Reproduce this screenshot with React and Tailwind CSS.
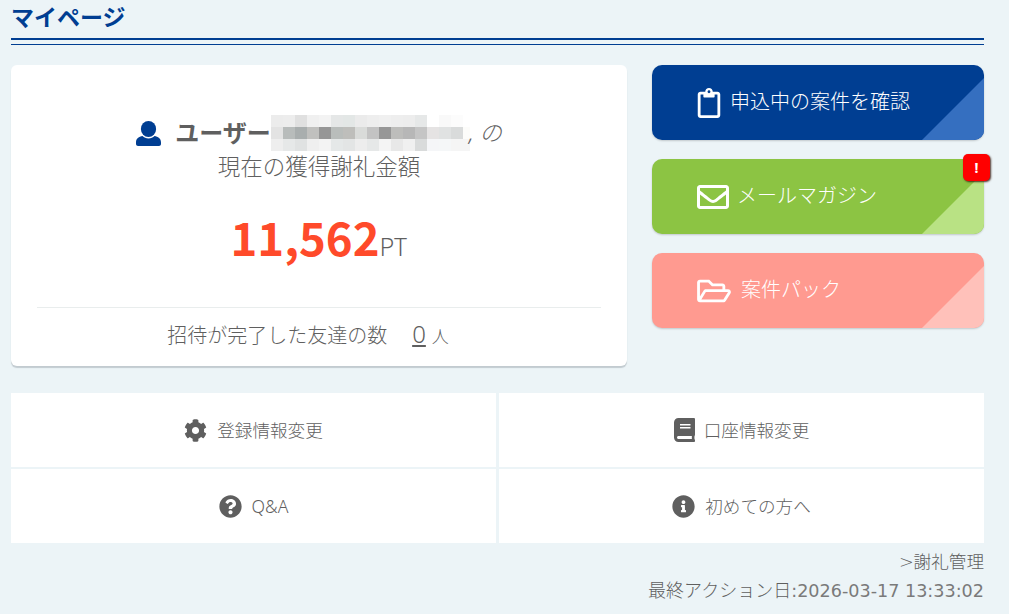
import React from "react";
import { FaRegClipboard, FaRegEnvelope, FaRegFolderOpen, FaCog, FaBook, FaQuestionCircle, FaInfoCircle } from "react-icons/fa";

const FONT = "font-['Noto_Sans','Noto_Sans_CJK_JP',sans-serif]";

const mosaic = [
  ["#ececec","#ededed","#e0e0e0","#f0f0f0","#f3f3f3","#e5e7e7","#e3e7e6","#ebebeb","#eeeeee","#f0f0f0","#eeeeee","#ededed","#e6e8e8","#ffffff","#f9f9f9","#fcfcfc","#ffffff"],
  ["#e3e3e3","#b8bcbb","#a9aeae","#c0c0be","#969696","#b9bdbb","#bebebb","#d9dbd9","#c3c3c3","#979797","#bdbdbb","#b7b7b7","#c5c5c5","#e5e3e3","#e0e2e2","#d9dbdb","#fcfcfa"],
  ["#eeeeee","#e6e8e8","#e0e2e2","#efefef","#f3f3f3","#e5e8e8","#e3e5e5","#ededed","#e6e8e8","#f4f4f4","#e8e8e8","#f0f0f0","#d9dbdb","#f5f6f8","#f5f7f8","#f5f5f5","#f5f5f5"],
];

function UserIcon() {
  return (
    <svg viewBox="0 0 25 25" className="mr-[14px] h-[25px] w-[25px] text-[#003e92]" fill="currentColor">
      <ellipse cx="12.5" cy="8" rx="7.6" ry="8" />
      <path d="M0 21.5C0 17.5 3 15.5 6.5 15 8 16.6 10 17.4 12.5 17.4S17 16.6 18.5 15C22 15.5 25 17.5 25 21.5V23C25 24.2 24 25 23 25H2C1 25 0 24.2 0 23Z" />
    </svg>
  );
}

function Action({ bg, tri, icon, gap, children, badge }) {
  return (
    <div className={`relative h-[75px] rounded-[10px] shadow-[0_1px_2px_rgba(0,0,0,0.18)] ${bg}`}>
      <div className="absolute inset-0 overflow-hidden rounded-[10px]">
        <div className={`absolute right-0 bottom-0 h-[62px] w-[62px] [clip-path:polygon(100%_0,100%_100%,0_100%)] ${tri}`} />
      </div>
      <div className={`relative flex h-full items-center pl-[45px] text-[20px] text-white ${gap}`}>
        {icon}
        <span className="-mt-[1px]">{children}</span>
      </div>
      {badge && (
        <div className="absolute -right-[6px] -top-[5px] flex h-[27px] w-[27px] items-center justify-center rounded-[5px] bg-[#ff0000] text-[14px] font-bold text-white shadow-[1px_1px_2px_rgba(60,30,20,0.9)]">!</div>
      )}
    </div>
  );
}

function Cell({ icon, gap, children }) {
  return (
    <div className={`flex h-[74px] items-center justify-center bg-white text-[17.6px] text-[#5f5f5f] ${gap}`}>
      {icon}
      <span>{children}</span>
    </div>
  );
}

export default function App() {
  return (
    <div className={`h-[614px] overflow-hidden bg-[#ecf4f7] pl-[11px] pr-[25px] font-light text-[#5f5f5f] ${FONT}`}>
      <h1 className="h-[38px] text-[23px] leading-[34px] font-bold text-[#003e92]">マイページ</h1>
      <div className="h-[7px] border-t-2 border-b border-t-[#003e92] border-b-[#003e92]" />

      <div className="mt-[20px] flex gap-[25px]">
        <div className="flex h-[301px] w-[616px] flex-col rounded-[6px] bg-white px-[26px] shadow-[0_2px_1px_#c2cbd0]">
          <div className="mt-[50px] flex h-[36px] items-center justify-center text-[22.4px]">
            <UserIcon />
            <span className="text-[24px] font-bold">ユーザー</span>
            <div className="flex flex-col">
              {mosaic.map((row, i) => (
                <div key={i} className="flex">
                  {row.map((c, j) => (
                    <div key={j} className={j === 16 ? "h-[12px] w-[7px]" : "h-[12px] w-[12px]"} style={{ background: c }} />
                  ))}
                </div>
              ))}
            </div>
            <span className="-ml-[1px] italic">, の</span>
          </div>
          <div className="mt-[-1px] text-center text-[22.5px] leading-[34px]">現在の獲得謝礼金額</div>
          <div className="mt-[22px] flex h-[60px] items-baseline justify-center font-['Noto_Sans_CJK_JP',sans-serif]">
            <span className="text-[45.5px] font-bold leading-[60px] text-[#ff4a2a]">11,562</span>
            <span className="text-[24px]">PT</span>
          </div>
          <div className="mt-[41px] flex h-[43px] items-baseline justify-center border-t border-[#e9eded] pt-[11px] pr-[22px]">
            <span className="text-[20px]">招待が完了した友達の数</span>
            <span className="ml-[25px] text-[24px] leading-[30px] underline underline-offset-2">0</span>
            <span className="ml-[6px] text-[17px]">人</span>
          </div>
        </div>

        <div className="flex flex-1 flex-col gap-[19px]">
          <Action bg="bg-[#003e92]" tri="bg-[#356fc0]" gap="gap-[9px]" icon={<FaRegClipboard className="h-[30px] w-[24px]" />}>申込中の案件を確認</Action>
          <Action bg="bg-[#8cc443]" tri="bg-[#b9e284]" gap="gap-[8px]" badge icon={<FaRegEnvelope className="h-[32px] w-[32px]" />}>メールマガジン</Action>
          <Action bg="bg-[#ff9a90]" tri="bg-[#ffc1ba]" gap="gap-[10px]" icon={<FaRegFolderOpen className="h-[30px] w-[34px]" />}>案件パック</Action>
        </div>
      </div>

      <div className="mt-[27px] grid grid-cols-2 gap-x-[3px] gap-y-[2px]">
        <Cell gap="gap-[10px]" icon={<FaCog className="h-[23px] w-[23px]" />}>登録情報変更</Cell>
        <Cell gap="gap-[9px]" icon={<FaBook className="h-[24px] w-[21px]" />}>口座情報変更</Cell>
        <Cell gap="gap-[10px]" icon={<FaQuestionCircle className="h-[23px] w-[23px]" />}>Q&amp;A</Cell>
        <Cell gap="gap-[10px]" icon={<FaInfoCircle className="h-[23px] w-[23px]" />}>初めての方へ</Cell>
      </div>

      <div className="mt-[6px] text-right text-[17.6px] leading-[26px] font-['DejaVu_Sans','Noto_Sans_CJK_JP',sans-serif]">&gt;謝礼管理</div>
      <div className="mt-[3px] text-right text-[18px] leading-[26px] font-['DejaVu_Sans','Noto_Sans_CJK_JP',sans-serif]">最終アクション日<span className="text-[17.6px] font-normal text-[#7a7a7a]">:2026-03-17 13:33:02</span></div>
    </div>
  );
}
